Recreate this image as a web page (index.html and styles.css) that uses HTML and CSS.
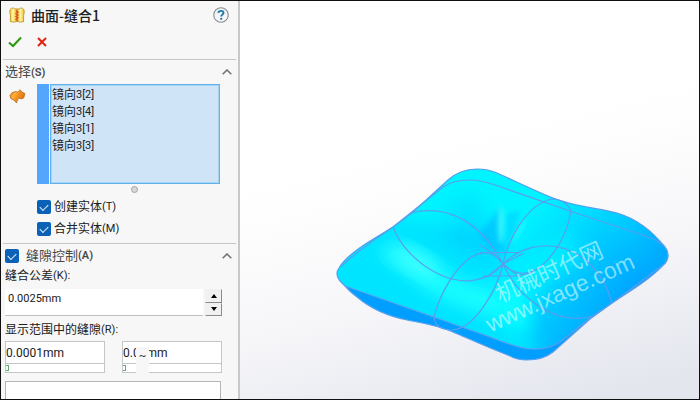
FILE: index.html
```html
<!DOCTYPE html>
<html lang="zh-CN">
<head>
<meta charset="utf-8">
<title>曲面-缝合1</title>
<link rel="stylesheet" href="styles.css">
</head>
<body>
<aside class="panel">
  <header class="title-row">
    <svg class="feature-icon" viewBox="0 0 17 17" aria-hidden="true">
      <defs>
        <linearGradient id="gold" x1="0" x2="1">
          <stop offset="0" stop-color="#f6c32c"/><stop offset=".45" stop-color="#fff6a0"/><stop offset="1" stop-color="#f3b92c"/>
        </linearGradient>
      </defs>
      <path d="M1 3Q2.500 .8 4.500 1Q6 2.500 8.200 2V15.500Q4.500 16.500 1.500 15.500V9Q.5 6 1 3Z" fill="url(#gold)" stroke="#b98f2c" stroke-width=".9"/>
      <path d="M16 3Q14.500 .8 12.500 1Q11 2.500 8.800 2V15.500Q12.500 16.500 15.500 15.500V9Q16.500 6 16 3Z" fill="url(#gold)" stroke="#b98f2c" stroke-width=".9"/>
      <path d="M7.300 4L9.700 5.500L7.300 7L9.700 8.500L7.300 10L9.700 11.500L7.300 13L9.700 14.500" fill="none" stroke="#dd4a22" stroke-width="1.200"/>
    </svg>
    <h1>曲面-缝合1</h1>
    <button class="icon-button help" aria-label="帮助">
      <svg viewBox="0 0 17 17" aria-hidden="true">
        <circle cx="8.500" cy="8.500" r="7.700" fill="#f3f5f7" stroke="#85888b" stroke-width="1.100"/>
        <path d="M5.800 6.400Q5.800 4.100 8.500 4.100Q11.200 4.100 11.200 6.200Q11.200 7.400 9.800 8.200Q8.700 8.900 8.700 10.200" fill="none" stroke="#1f7ba6" stroke-width="2"/>
        <circle cx="8.700" cy="12.500" r="1.200" fill="#1f7ba6"/>
      </svg>
    </button>
  </header>
  <div class="actions">
    <button class="icon-button" aria-label="确定">
      <svg viewBox="0 0 14 12" aria-hidden="true"><path d="M1 6.500L5 10L13 1.500" fill="none" stroke="#279a0c" stroke-width="2"/></svg>
    </button>
    <button class="icon-button" aria-label="取消">
      <svg viewBox="0 0 14 12" aria-hidden="true"><path d="M2 2L10 10M10 2L2 10" fill="none" stroke="#e02311" stroke-width="2"/></svg>
    </button>
  </div>

  <section class="group">
    <div class="group-head">
      <h2>选择<b>(S)</b></h2>
      <button class="icon-button chevron" aria-label="收起选择">
        <svg viewBox="0 0 10 6" aria-hidden="true"><path d="M.7 5.300L5 1L9.300 5.300" fill="none" stroke="#737373" stroke-width="1.600"/></svg>
      </button>
    </div>
    <div class="selection">
      <svg class="surface-icon" viewBox="0 0 17 15" aria-hidden="true">
        <defs>
          <linearGradient id="amber" x1="0" y1="0" x2="1" y2=".5">
            <stop offset="0" stop-color="#e97d12"/><stop offset=".4" stop-color="#ffb03c"/><stop offset=".6" stop-color="#f0901d"/><stop offset="1" stop-color="#dc7710"/>
          </linearGradient>
        </defs>
        <path d="M1 6.500Q2.500 3 6.500 2.600Q9.500 4.500 11 .7Q12.500 3.500 15.800 4.500L14.800 8.800Q13 10.500 10.500 9.300Q8 9.500 7.500 14Q5.500 10.500 1.800 9.500Z" fill="url(#amber)" stroke="#b5651a" stroke-width=".8"/>
      </svg>
      <div class="swatch"></div>
      <ul class="picked">
        <li>镜向<span>3[2]</span></li>
        <li>镜向<span>3[4]</span></li>
        <li>镜向<span>3[1]</span></li>
        <li>镜向<span>3[3]</span></li>
      </ul>
    </div>
    <div class="grip"><i></i></div>
    <div class="options">
      <label><input type="checkbox" checked>创建实体<span>(T)</span></label>
      <label><input type="checkbox" checked>合并实体<span>(M)</span></label>
    </div>
  </section>

  <section class="group gaps">
    <div class="group-head">
      <h2><label><input type="checkbox" checked>缝隙控制<b>(A)</b></label></h2>
      <button class="icon-button chevron" aria-label="收起缝隙控制">
        <svg viewBox="0 0 10 6" aria-hidden="true"><path d="M.7 5.300L5 1L9.300 5.300" fill="none" stroke="#737373" stroke-width="1.600"/></svg>
      </button>
    </div>
    <label class="caption" for="tolerance">缝合公差<span>(K):</span></label>
    <div class="tolerance">
      <input id="tolerance" type="text" value="0.0025mm">
      <div class="spinner">
        <button aria-label="增加"><svg viewBox="0 0 6 4" aria-hidden="true"><path d="M0 4L3 0L6 4Z"/></svg></button>
        <button aria-label="减少"><svg viewBox="0 0 6 4" aria-hidden="true"><path d="M0 0L3 4L6 0Z"/></svg></button>
      </div>
    </div>
    <label class="caption range-caption" for="gap-min">显示范围中的缝隙<span>(R):</span></label>
    <div class="range">
      <div class="bound">
        <input id="gap-min" type="text" value="0.0001mm">
        <input type="range" value="0" aria-label="最小缝隙">
      </div>
      <div class="bound">
        <input type="text" value="0.01mm" aria-label="最大缝隙值">
        <input type="range" value="0" aria-label="最大缝隙">
        <span class="tilde">~</span>
      </div>
    </div>
    <div class="gap-list"></div>
  </section>
</aside>

<main class="viewport">
  <svg class="model" viewBox="240 1 459 398" preserveAspectRatio="xMidYMid slice" role="img" aria-label="缝合曲面模型">
    <defs>
      <linearGradient id="sky" gradientUnits="userSpaceOnUse" x1="430" y1="130" x2="500" y2="420">
        <stop offset="0" stop-color="#fff"/><stop offset=".15" stop-color="#fefefe"/><stop offset=".55" stop-color="#f6f6f9"/><stop offset="1" stop-color="#e4e6ee"/>
      </linearGradient>
      <linearGradient id="face" gradientUnits="userSpaceOnUse" x1="500" y1="245" x2="605" y2="325">
        <stop offset="0" stop-color="#00f4ff"/><stop offset=".4" stop-color="#00daff"/><stop offset="1" stop-color="#00a6ff"/>
      </linearGradient>
      <linearGradient id="rim" gradientUnits="userSpaceOnUse" x1="570" y1="200" x2="665" y2="255">
        <stop offset="0" stop-color="#00f0ff" stop-opacity="0"/><stop offset=".5" stop-color="#00d0ff" stop-opacity=".7"/><stop offset="1" stop-color="#00a8ff"/>
      </linearGradient>
      <filter id="soft" x="-50%" y="-50%" width="200%" height="200%"><feGaussianBlur stdDeviation="9"/></filter>
      <filter id="fine" x="-80%" y="-50%" width="260%" height="200%"><feGaussianBlur stdDeviation="2.500"/></filter>
      <path id="body" d="M339 268Q343 261 353 253C365 243 379 236 393 227Q403 220 413 212L448 180Q460 169 477 169Q488 169 497 173C515 181 533 190 553 198C573 206 597 208 617 213C637 219 651 230 665 247Q671 255 665 263C655 276 630 291 612 303Q601 311 590 319L553 352Q543 360 527 360Q517 360 510 356C492 349 474 341 453 332C437 325 422 323 407 320C387 316 370 308 357 297Q350 292 345 286Q333 276 339 268Z"/>
      <path id="top" d="M339 268Q343 261 353 253C365 243 379 236 393 227Q403 220 413 212L448 180Q460 169 477 169Q488 169 497 173C515 181 533 190 553 198C573 206 597 208 617 213C637 219 651 230 665 247Q671 255 665 263L612 303L590 318L562 340Q550 350 530 349Q518 348 490 337L345 286Q333 276 339 268Z"/>
      <clipPath id="topClip"><use href="#top"/></clipPath>
    </defs>
    <rect x="0" y="-400" width="1600" height="1600" fill="url(#sky)"/>
    <use href="#body" fill="#009fff"/>
    <use href="#top" fill="url(#face)"/>
    <g clip-path="url(#topClip)">
      <path d="M330 240L400 215L500 240L503 264L540 360L500 360L330 300Z" fill="#00e4ff" filter="url(#soft)"/>
      <path d="M375 250Q405 240 430 262Q465 290 505 290L530 325Q460 310 425 288Z" fill="#1dffff" filter="url(#soft)"/>
      <ellipse cx="416" cy="262" rx="26" ry="9" transform="rotate(28 416 262)" fill="#45ffff" filter="url(#soft)"/>
      <path d="M440 205L478 195L500 250L485 255Z" fill="#00d8ff" opacity=".6" filter="url(#soft)"/>
      <path d="M430 235L470 225L500 262L480 256Z" fill="#00ccff" opacity=".7" filter="url(#soft)"/>
      <path d="M478 235L500 208L506 254L490 250Z" fill="#00bfff" opacity=".7" filter="url(#fine)"/>
      <path d="M507 252L506 215L520 210L514 235Z" fill="#00ccff" opacity=".6" filter="url(#fine)"/>
      <ellipse cx="501" cy="225" rx="2.500" ry="19" fill="#43fbff" filter="url(#fine)"/>
      <ellipse cx="518" cy="232" rx="1.500" ry="14" transform="rotate(32 518 232)" fill="#35ffff" filter="url(#fine)"/>
      <path d="M520 260L560 235L585 250L540 290L515 345L495 290Z" fill="#00f5ff" opacity=".65" filter="url(#soft)"/>
      <path d="M500 275L522 290L527 330L505 320Z" fill="#0cffff" opacity=".7" filter="url(#soft)"/>
      <path d="M570 190L690 225V285L645 270Z" fill="url(#rim)" filter="url(#soft)"/>
    </g>
    <g fill="none" stroke="#589fee" stroke-width="1.200">
      <use href="#body"/>
      <path d="M341 267Q348 259 370 243L393 227L443 187Q453 180 470 180Q480 180 495 185L570 211L645 236Q662 241 667 250"/>
      <path d="M345 286L434 317L490 337Q518 348 530 349Q548 350 560 342L590 318L612 303L663 265Q668 262 668 255"/>
      <path d="M410 213C450 203 483 225 503 264C520 301 557 326 593 316"/>
      <path d="M393 227C407 265 468 304 503 264C538 230 596 244 612 303"/>
      <path d="M503 264C510 233 530 203 552 199C562 199 569 205 571 211C567 235 554 256 540 267Q520 281 503 264"/>
      <path d="M503 264Q488 243 466 261C449 276 438 301 434 317Q435 329 450 330C474 331 497 290 503 264"/>
      <path d="M480 252.500H520M483 276H518M480 245L494 254L503 264L524 253M487 277L503 264L518 276L533 272"/>
    </g>
    <g class="watermark" transform="translate(500 303) rotate(-24)">
      <text x="0" y="0">机械时代网</text>
      <text class="url" x="-21" y="23">www.jxage.com</text>
    </g>
  </svg>
</main>
</body>
</html>
```

FILE: styles.css
```css
* {
  box-sizing: border-box;
}

body {
  margin: 0;
  height: 100vh;
  display: grid;
  grid-template-columns: 239px 1fr;
  grid-template-rows: minmax(0, 1fr);
  overflow: hidden;
  border: 1px solid #120f10;
  color: #202020;
  font-family: Roboto, "Noto Sans CJK SC", sans-serif;
  font-size: 12px;
  line-height: 16px;
}

h1,
h2,
ul {
  margin: 0;
  padding: 0;
  font-weight: 400;
}

button,
input {
  margin: 0;
  font: inherit;
  color: inherit;
}

.panel {
  display: flex;
  flex-direction: column;
  min-height: 0;
  overflow: hidden;
  padding: 0 2px;
  background: #f7f7f7;
  border-right: 2px solid #c8c8ca;
}

.title-row {
  display: flex;
  align-items: center;
  height: 28px;
  padding: 0 7px 0 6px;
}

.feature-icon {
  width: 16px;
  height: 16px;
}

h1 {
  flex: 1;
  margin-left: 6px;
  font-family: "Noto Sans CJK SC", sans-serif;
  font-size: 14px;
  font-weight: 500;
}

.icon-button {
  display: flex;
  padding: 0;
  border: 0;
  background: none;
}

.help svg {
  width: 16px;
  height: 16px;
}

.actions {
  display: flex;
  align-items: center;
  gap: 14px;
  height: 26px;
  margin-bottom: 4px;
  padding-left: 5px;
}

.actions svg {
  width: 14px;
  height: 12px;
}

.group {
  display: flex;
  flex-direction: column;
  border-top: 1px solid #c6c6c6;
  padding-left: 2px;
}

.group-head {
  display: flex;
  align-items: center;
  justify-content: space-between;
  height: 24px;
  padding-right: 4px;
  color: #484848;
}

h2 {
  font-size: 13px;
}

h2 b {
  font-size: 11px;
  font-weight: 600;
}

.chevron svg {
  width: 10px;
  height: 6px;
}

.selection {
  display: flex;
  height: 100px;
  padding: 0 16px 0 4px;
}

.surface-icon {
  width: 17px;
  height: 15px;
  margin: 5px 11px 0 0;
}

.swatch {
  width: 12px;
  margin-right: 1px;
  background: #54a6fc;
}

.picked {
  flex: 1;
  padding: 1px;
  border: 1px solid #5fb3ea;
  outline: 1px solid #a5d4f2;
  outline-offset: -2px;
  background: #d0e4f8;
  list-style: none;
}

.picked li {
  display: flex;
  align-items: center;
  height: 17px;
}

.picked span,
.caption span,
.options span {
  font-size: 11px;
}

.grip {
  display: flex;
  justify-content: center;
  align-items: center;
  height: 10px;
  padding-left: 28px;
}

.grip i {
  width: 7px;
  height: 7px;
  border: 1px solid #a3a3a3;
  border-radius: 50%;
  background: #d8d8d8;
}

.options {
  display: flex;
  flex-direction: column;
  padding: 2px 0 3px 32px;
}

label {
  display: flex;
  align-items: center;
}

.options label {
  height: 22px;
}

input[type="checkbox"] {
  appearance: none;
  width: 14px;
  height: 14px;
  margin-right: 3px;
  border-radius: 2px;
  background: #0a62b8;
  display: grid;
  place-items: center;
}

input[type="checkbox"]::before {
  content: "";
  width: 7px;
  height: 4px;
  margin-top: -2px;
  border: solid #e6f0fa;
  border-width: 0 0 1px 1px;
  transform: rotate(-45deg);
}

h2 input[type="checkbox"] {
  margin-right: 7px;
}

.gaps {
  flex: 1;
  min-height: 0;
}

.tolerance {
  display: flex;
  gap: 2px;
  height: 27px;
  margin: 5px 14px 0 0;
}

input[type="text"] {
  width: 100%;
  min-width: 0;
  border: 0;
  outline: 0;
  background: #fff;
  font-size: 12px;
}

.tolerance input[type="text"] {
  flex: 1;
  padding: 0 3px 6px;
  border-bottom: 1px solid #c0c0c0;
  font-size: 11px;
}

.spinner {
  display: grid;
  width: 17px;
}

.spinner button {
  display: grid;
  place-items: center;
  min-height: 0;
  padding: 0;
  border: 1px solid #f0f0f0;
  border-right-color: #8a8a8a;
  border-bottom-color: #8a8a8a;
  background: #f1f1f1;
}

.spinner svg {
  width: 6px;
  height: 4px;
}

.range-caption {
  margin-top: 6px;
}

.range {
  display: grid;
  grid-template-columns: 1fr 1fr;
  gap: 17px;
  margin: 3px 14px 0 0;
}

.bound {
  position: relative;
  display: flex;
  flex-direction: column;
  height: 32px;
  border: 1px solid #c6c6c6;
  background: #fff;
}

.bound input[type="text"] {
  height: 21px;
  padding: 0;
}

input[type="range"] {
  appearance: none;
  width: 100%;
  height: 9px;
  border-top: 1px solid #c6c6c6;
  background: #fff;
}

input[type="range"]::-webkit-slider-thumb {
  appearance: none;
  width: 3px;
  height: 6px;
  border: 1px solid #5fae6b;
  border-left: 0;
}

.tilde {
  position: absolute;
  top: 5px;
  left: 13px;
  width: 13px;
  height: 26px;
  background: #f7f7f7;
  font-size: 11px;
  line-height: 18px;
  text-align: center;
}

.gap-list {
  flex: 1;
  margin: 8px 15px 0 0;
  border: 1px solid #b5b5b5;
  border-bottom: 0;
  background: #fff;
}

.viewport {
  min-width: 0;
  min-height: 0;
}

.model {
  display: block;
  width: 100%;
  height: 100%;
}

.watermark {
  fill: #d5fbff;
  fill-opacity: 0.6;
  font-family: "Noto Sans CJK SC", sans-serif;
  font-size: 23px;
  font-weight: 400;
}

.watermark .url {
  font-family: "Liberation Sans", sans-serif;
}
```
